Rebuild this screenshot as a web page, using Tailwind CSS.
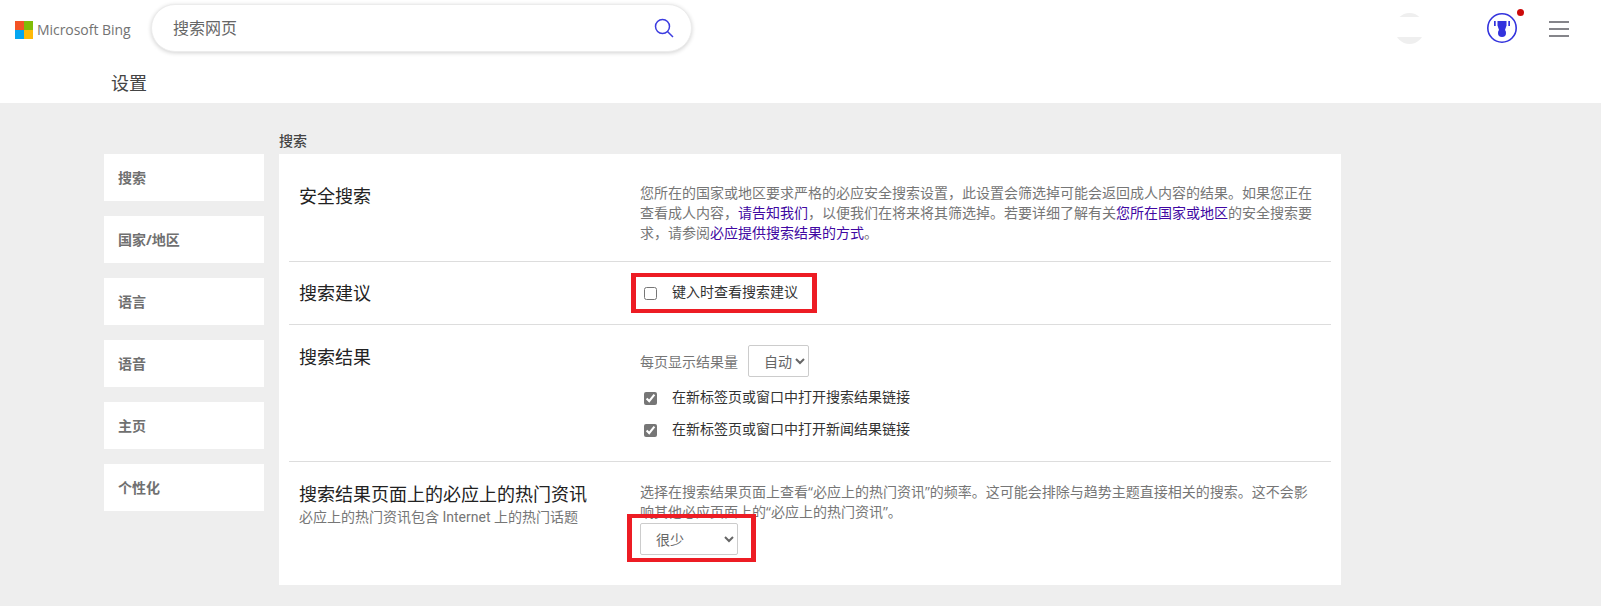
<!DOCTYPE html>
<html lang="zh-CN">
<head>
    <meta charset="UTF-8">
    <meta name="viewport" content="width=device-width, initial-scale=1.0">
    <title>设置</title>
    <script src="https://cdn.jsdelivr.net/npm/@tailwindcss/browser@4"></script>
</head>
<body class="bg-[#eeeeee] min-h-screen overflow-hidden font-['Open_Sans','Noto_Sans_CJK_SC',sans-serif] text-[14px]">
    <!-- Header -->
    <header class="bg-white h-[103px]">
        <div class="flex items-start h-[71px]">
            <div class="flex items-center ml-[15px] mt-[19px] w-[136px]">
                <div class="grid grid-cols-2 w-[18px] h-[18px]">
                    <span class="bg-[#f35325]"></span>
                    <span class="bg-[#81bc06]"></span>
                    <span class="bg-[#05a6f0]"></span>
                    <span class="bg-[#ffba08]"></span>
                </div>
                <span class="ml-[4px] text-[14px] tracking-[-0.05px] text-[#737373] whitespace-nowrap">Microsoft Bing</span>
            </div>
            <div class="flex items-center justify-between w-[541px] h-[48px] mt-[4px] pl-[21px] pr-[17px] rounded-[24px] bg-white border border-[#ececec] shadow-[0_1px_4px_rgba(0,0,0,0.18)]">
                <span class="text-[16px] text-[#666666]">搜索网页</span>
                <svg width="20" height="20" viewBox="0 0 20 20" fill="none" stroke="#3c3ce0" stroke-width="1.5">
                    <circle cx="8.5" cy="8.5" r="7"></circle>
                    <path d="M13.5 13.5 L19 19"></path>
                </svg>
            </div>
            <div class="flex flex-col justify-between w-[29px] h-[31px] ml-[703px] mt-[13px] rounded-full overflow-hidden bg-white">
                <span class="h-[4px] bg-[#efefef]"></span>
                <span class="h-[7px] bg-[#efefef]"></span>
            </div>
            <div class="relative ml-[63px] mt-[13px] w-[30px] h-[30px]">
                <svg width="30" height="30" viewBox="0 0 30 30" fill="#3333dd">
                    <circle cx="15" cy="15" r="14.2" fill="none" stroke="#3333dd" stroke-width="1.6"></circle>
                    <path d="M10.5 8 H19.5 V12.5 L18 17 H12 L10.5 12.5 Z"></path>
                    <circle cx="15" cy="20" r="4"></circle>
                    <rect x="7" y="8" width="1.7" height="5"></rect>
                    <rect x="21.3" y="8" width="1.7" height="5"></rect>
                </svg>
                <span class="absolute left-[30px] top-[-4px] w-[7px] h-[7px] rounded-full bg-[#cc0a0a]"></span>
            </div>
            <div class="flex flex-col gap-[5px] w-[20px] ml-[32px] mt-[21px]">
                <span class="h-[2px] bg-[#85858a]"></span>
                <span class="h-[2px] bg-[#85858a]"></span>
                <span class="h-[2px] bg-[#85858a]"></span>
            </div>
        </div>
        <h1 class="ml-[111px] text-[18px] leading-[24px] text-[#444444]">设置</h1>
    </header>

    <!-- Settings -->
    <main class="flex pl-[104px] pt-[51px]">
        <nav class="flex flex-col gap-[15px] w-[160px] mr-[15px] text-[#707070] font-bold">
            <a class="flex items-center h-[47px] pl-[14px] bg-white">搜索</a>
            <a class="flex items-center h-[47px] pl-[14px] bg-white">国家/地区</a>
            <a class="flex items-center h-[47px] pl-[14px] bg-white">语言</a>
            <a class="flex items-center h-[47px] pl-[14px] bg-white">语音</a>
            <a class="flex items-center h-[47px] pl-[14px] bg-white">主页</a>
            <a class="flex items-center h-[47px] pl-[14px] bg-white">个性化</a>
        </nav>
        <div class="relative w-[1062px]">
            <h2 class="absolute top-[-23px] left-0 font-medium text-[#444444] leading-[20px]">搜索</h2>
            <section class="bg-white h-[431px] px-[10px]">
                <!-- 安全搜索 -->
                <div class="flex h-[108px] border-b border-[#dddddd]">
                    <h3 class="w-[351px] pl-[10px] pt-[30px] text-[18px] leading-[24px] text-[#222222]">安全搜索</h3>
                    <p class="w-[680px] pt-[29px] leading-[20px] text-[#767676]">您所在的国家或地区要求严格的必应安全搜索设置，此设置会筛选掉可能会返回成人内容的结果。如果您正在查看成人内容，<a class="text-[#4007a2]">请告知我们</a>，以便我们在将来将其筛选掉。若要详细了解有关<a class="text-[#4007a2]">您所在国家或地区</a>的安全搜索要求，请参阅<a class="text-[#4007a2]">必应提供搜索结果的方式</a>。</p>
                </div>
                <!-- 搜索建议 -->
                <div class="flex h-[63px] border-b border-[#dddddd]">
                    <h3 class="w-[351px] pl-[10px] pt-[19px] text-[18px] leading-[24px] text-[#222222]">搜索建议</h3>
                    <label class="flex items-center h-[62px] pl-[4px] text-[#333333]">
                        <input type="checkbox" class="w-[13px] h-[13px] mr-[15px]">
                        <span class="pb-[4px]">键入时查看搜索建议</span>
                    </label>
                </div>
                <!-- 搜索结果 -->
                <div class="flex h-[137px] border-b border-[#dddddd]">
                    <h3 class="w-[351px] pl-[10px] pt-[20px] text-[18px] leading-[24px] text-[#222222]">搜索结果</h3>
                    <div class="pt-[20px]">
                        <div class="flex items-center text-[#767676]">
                            每页显示结果量
                            <select class="w-[61px] h-[32px] ml-[10px] pl-[11px] bg-white border border-[#cccccc] rounded-[2px] text-[#666666]">
                                <option>自动</option>
                            </select>
                        </div>
                        <label class="flex items-center h-[20px] mt-[11px] pl-[4px] text-[#333333]">
                            <input type="checkbox" checked class="w-[13px] h-[13px] mr-[15px] accent-[#767676]">
                            <span class="pb-[4px]">在新标签页或窗口中打开搜索结果链接</span>
                        </label>
                        <label class="flex items-center h-[20px] mt-[12px] pl-[4px] text-[#333333]">
                            <input type="checkbox" checked class="w-[13px] h-[13px] mr-[15px] accent-[#767676]">
                            <span class="pb-[4px]">在新标签页或窗口中打开新闻结果链接</span>
                        </label>
                    </div>
                </div>
                <!-- 热门资讯 -->
                <div class="flex">
                    <div class="w-[351px] pl-[10px] pt-[20px]">
                        <h3 class="text-[18px] leading-[24px] text-[#222222]">搜索结果页面上的必应上的热门资讯</h3>
                        <p class="mt-[1px] leading-[20px] text-[#767676] font-['Roboto','Noto_Sans_CJK_SC',sans-serif]">必应上的热门资讯包含 Internet 上的热门话题</p>
                    </div>
                    <div class="w-[680px] pt-[20px]">
                        <p class="leading-[20px] text-[#767676]">选择在搜索结果页面上查看“必应上的热门资讯”的频率。这可能会排除与趋势主题直接相关的搜索。这不会影响其他必应页面上的“必应上的热门资讯”。</p>
                        <select class="block w-[98px] h-[32px] mt-[1px] pl-[11px] bg-white border border-[#cccccc] rounded-[2px] text-[#666666]">
                            <option>很少</option>
                        </select>
                    </div>
                </div>
            </section>
            <!-- annotation boxes -->
            <div class="absolute left-[352px] top-[119px] w-[186px] h-[40px] border-x-[5px] border-y-[4px] border-[#ed1c24]"></div>
            <div class="absolute left-[348px] top-[360px] w-[129px] h-[48px] border-x-[5px] border-y-[4px] border-[#ed1c24]"></div>
        </div>
    </main>
</body>
</html>
